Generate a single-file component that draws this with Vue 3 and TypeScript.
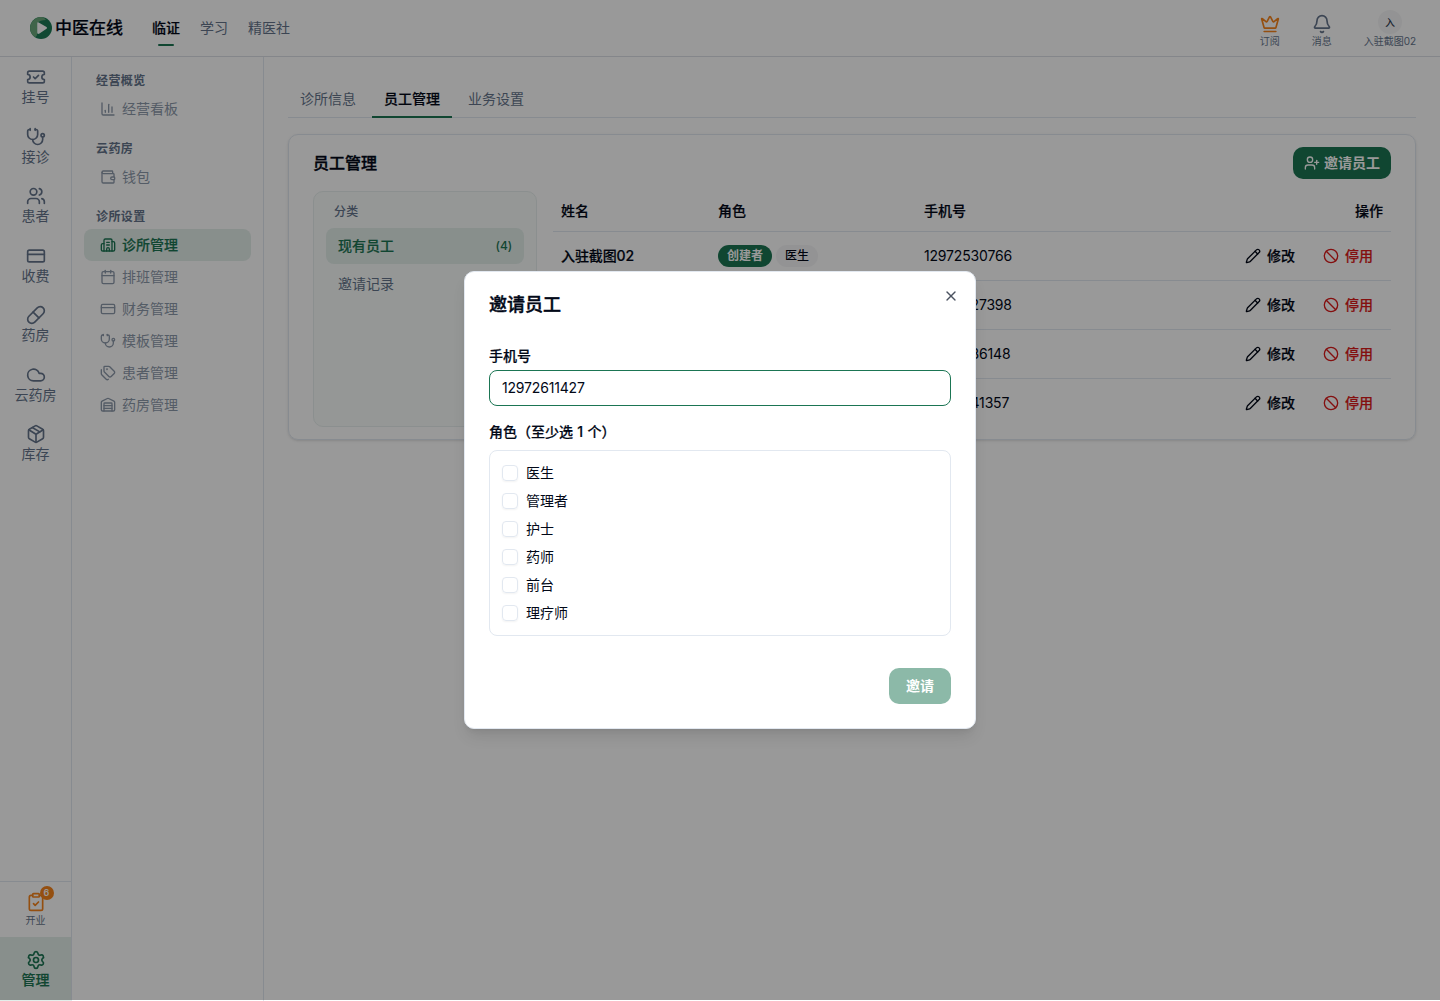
<script setup lang="ts">
import { h, ref, type FunctionalComponent } from 'vue'

const glyphs: Record<string, string[]> = {
  ticket: ['M2 9a3 3 0 0 1 0 6v2a2 2 0 0 0 2 2h16a2 2 0 0 0 2-2v-2a3 3 0 0 1 0-6V7a2 2 0 0 0-2-2H4a2 2 0 0 0-2 2Z', 'm9 12 2 2 4-4'],
  stethoscope: ['M11 2v2', 'M5 2v2', 'M5 3H4a2 2 0 0 0-2 2v4a6 6 0 0 0 12 0V5a2 2 0 0 0-2-2h-1', 'M8 15a6 6 0 0 0 12 0v-3', 'M22 10a2 2 0 1 1-4 0 2 2 0 0 1 4 0Z'],
  users: ['M16 21v-2a4 4 0 0 0-4-4H6a4 4 0 0 0-4 4v2', 'M16 3.128a4 4 0 0 1 0 7.744', 'M22 21v-2a4 4 0 0 0-3-3.87', 'M13 7a4 4 0 1 1-8 0 4 4 0 0 1 8 0Z'],
  card: ['M4 5h16a2 2 0 0 1 2 2v10a2 2 0 0 1-2 2H4a2 2 0 0 1-2-2V7a2 2 0 0 1 2-2Z', 'M2 10h20'],
  pill: ['m10.5 20.5 10-10a4.95 4.95 0 1 0-7-7l-10 10a4.95 4.95 0 1 0 7 7Z', 'm8.5 8.5 7 7'],
  cloud: ['M17.5 19H9a7 7 0 1 1 6.71-9h1.79a4.5 4.5 0 1 1 0 9Z'],
  box: ['M11 21.73a2 2 0 0 0 2 0l7-4A2 2 0 0 0 21 16V8a2 2 0 0 0-1-1.73l-7-4a2 2 0 0 0-2 0l-7 4A2 2 0 0 0 3 8v8a2 2 0 0 0 1 1.73z', 'M12 22V12', 'm3.3 7 7.703 4.734a2 2 0 0 0 1.994 0L20.7 7', 'm7.5 4.27 9 5.15'],
  clipboard: ['M9 2h6a1 1 0 0 1 1 1v2a1 1 0 0 1-1 1H9a1 1 0 0 1-1-1V3a1 1 0 0 1 1-1Z', 'M16 4h2a2 2 0 0 1 2 2v14a2 2 0 0 1-2 2H6a2 2 0 0 1-2-2V6a2 2 0 0 1 2-2h2', 'm9 14 2 2 4-4'],
  gear: ['M9.671 4.136a2.34 2.34 0 0 1 4.659 0 2.34 2.34 0 0 0 3.319 1.915 2.34 2.34 0 0 1 2.33 4.033 2.34 2.34 0 0 0 0 3.831 2.34 2.34 0 0 1-2.33 4.033 2.34 2.34 0 0 0-3.319 1.915 2.34 2.34 0 0 1-4.659 0 2.34 2.34 0 0 0-3.32-1.915 2.34 2.34 0 0 1-2.33-4.033 2.34 2.34 0 0 0 0-3.831A2.34 2.34 0 0 1 6.35 6.051a2.34 2.34 0 0 0 3.319-1.915', 'M15 12a3 3 0 1 1-6 0 3 3 0 0 1 6 0Z'],
  chart: ['M3 3v16a2 2 0 0 0 2 2h16', 'M18 17V9', 'M13 17V5', 'M8 17v-3'],
  wallet: ['M19 7V4a1 1 0 0 0-1-1H5a2 2 0 0 0 0 4h15a1 1 0 0 1 1 1v4h-3a2 2 0 0 0 0 4h3a1 1 0 0 0 1-1v-2a1 1 0 0 0-1-1', 'M3 5v14a2 2 0 0 0 2 2h15a1 1 0 0 0 1-1v-4'],
  building: ['M10 12h4', 'M10 8h4', 'M14 21v-3a2 2 0 0 0-4 0v3', 'M6 10H4a2 2 0 0 0-2 2v7a2 2 0 0 0 2 2h16a2 2 0 0 0 2-2V9a2 2 0 0 0-2-2h-2', 'M6 21V5a2 2 0 0 1 2-2h8a2 2 0 0 1 2 2v16'],
  calendar: ['M8 2v4', 'M16 2v4', 'M5 4h14a2 2 0 0 1 2 2v14a2 2 0 0 1-2 2H5a2 2 0 0 1-2-2V6a2 2 0 0 1 2-2Z', 'M3 10h18'],
  tags: ['M13.172 2a2 2 0 0 1 1.414.586l6.71 6.71a2.4 2.4 0 0 1 0 3.408l-4.592 4.592a2.4 2.4 0 0 1-3.408 0l-6.71-6.71A2 2 0 0 1 6 9.172V3a1 1 0 0 1 1-1z', 'M2 7v6.172a2 2 0 0 0 .586 1.414l6.71 6.71a2.4 2.4 0 0 0 3.191.193', 'M11 6.5a.5.5 0 1 1-1 0 .5.5 0 0 1 1 0Z'],
  warehouse: ['M18 21V10a1 1 0 0 0-1-1H7a1 1 0 0 0-1 1v11', 'M22 19a2 2 0 0 1-2 2H4a2 2 0 0 1-2-2V8a2 2 0 0 1 1.132-1.803l7.95-3.974a2 2 0 0 1 1.837 0l7.948 3.974A2 2 0 0 1 22 8z', 'M6 13h12', 'M6 17h12'],
  crown: ['M11.562 3.266a.5.5 0 0 1 .876 0L15.39 8.87a1 1 0 0 0 1.516.294L21.183 5.5a.5.5 0 0 1 .798.519l-2.834 10.246a1 1 0 0 1-.956.734H5.81a1 1 0 0 1-.957-.734L2.02 6.02a.5.5 0 0 1 .798-.519l4.276 3.664a1 1 0 0 0 1.516-.294z', 'M5 21h14'],
  bell: ['M10.268 21a2 2 0 0 0 3.464 0', 'M3.262 15.326A1 1 0 0 0 4 17h16a1 1 0 0 0 .74-1.673C19.41 13.956 18 12.499 18 8A6 6 0 0 0 6 8c0 4.499-1.411 5.956-2.738 7.326'],
  userPlus: ['M16 21v-2a4 4 0 0 0-4-4H6a4 4 0 0 0-4 4v2', 'M13 7a4 4 0 1 1-8 0 4 4 0 0 1 8 0Z', 'M19 8v6', 'M22 11h-6'],
  pencil: ['M21.174 6.812a1 1 0 0 0-3.986-3.987L3.842 16.174a2 2 0 0 0-.5.83l-1.321 4.352a.5.5 0 0 0 .623.622l4.353-1.32a2 2 0 0 0 .83-.497z', 'm15 5 4 4'],
  ban: ['M22 12a10 10 0 1 1-20 0 10 10 0 0 1 20 0Z', 'm4.93 4.93 14.14 14.14'],
  close: ['M18 6 6 18', 'm6 6 12 12'],
}

const Icon: FunctionalComponent<{ name: string; size?: number; weight?: number }> = (props) =>
  h(
    'svg',
    {
      width: props.size ?? 16,
      height: props.size ?? 16,
      viewBox: '0 0 24 24',
      fill: 'none',
      stroke: 'currentColor',
      'stroke-width': props.weight ?? 2,
      'stroke-linecap': 'round',
      'stroke-linejoin': 'round',
    },
    glyphs[props.name].map((d) => h('path', { d })),
  )
Icon.props = ['name', 'size', 'weight']

const rail = [
  { icon: 'ticket', label: '挂号' },
  { icon: 'stethoscope', label: '接诊' },
  { icon: 'users', label: '患者' },
  { icon: 'card', label: '收费' },
  { icon: 'pill', label: '药房' },
  { icon: 'cloud', label: '云药房' },
  { icon: 'box', label: '库存' },
]

const groups = [
  { title: '经营概览', items: [{ icon: 'chart', label: '经营看板' }] },
  { title: '云药房', items: [{ icon: 'wallet', label: '钱包' }] },
  {
    title: '诊所设置',
    items: [
      { icon: 'building', label: '诊所管理', active: true },
      { icon: 'calendar', label: '排班管理' },
      { icon: 'card', label: '财务管理' },
      { icon: 'stethoscope', label: '模板管理' },
      { icon: 'tags', label: '患者管理' },
      { icon: 'warehouse', label: '药房管理' },
    ],
  },
] as { title: string; items: { icon: string; label: string; active?: boolean }[] }[]

const staff = [
  { name: '入驻截图02', roles: ['创建者', '医生'], phone: '12972530766' },
  { name: '员工一', roles: ['医生'], phone: '12972527398' },
  { name: '员工二', roles: ['护士'], phone: '12972536148' },
  { name: '员工三', roles: ['药师'], phone: '12972541357' },
]

const roles = ['医生', '管理者', '护士', '药师', '前台', '理疗师']
const phone = ref('12972611427')
const picked = ref<string[]>([])
</script>

<template>
  <div class="app">
    <header class="topbar">
      <div class="brand">
        <svg class="logo" viewBox="0 0 22 22">
          <circle cx="11" cy="11" r="11" fill="#1b7a55" />
          <path d="M13 0.200A11 11 0 0 0 5 20.200Q7.500 19 7.200 16V6Q10 3 16 3Q15 1.200 13 0.200Z" fill="#6aa77a" />
          <path d="M7.200 6.300Q7.200 4.600 8.700 5.500L16.500 10Q17.800 10.900 16.500 11.800L9.500 16.500Q7.200 17.800 7.200 15.500Z" fill="#fff" />
        </svg>
        <span>中医在线</span>
      </div>
      <nav class="mainnav">
        <a class="current">临证</a>
        <a>学习</a>
        <a>精医社</a>
      </nav>
      <div class="tools">
        <div class="tool"><Icon class="orange" name="crown" :size="20" /><span>订阅</span></div>
        <div class="tool"><Icon name="bell" :size="20" /><span>消息</span></div>
        <div class="tool account"><i class="avatar">入</i><span>入驻截图02</span></div>
      </div>
    </header>

    <div class="body">
      <aside class="rail">
        <a v-for="r in rail" :key="r.label" class="rail-item">
          <Icon :name="r.icon" :size="20" />
          <span>{{ r.label }}</span>
        </a>
        <div class="rail-foot">
          <a class="opening">
            <span class="clip"><Icon name="clipboard" :size="20" /><b class="count">6</b></span>
            <span>开业</span>
          </a>
          <a class="manage">
            <Icon name="gear" :size="20" />
            <span>管理</span>
          </a>
        </div>
      </aside>

      <aside class="side">
        <section v-for="g in groups" :key="g.title" class="group">
          <h4>{{ g.title }}</h4>
          <a v-for="i in g.items" :key="i.label" class="side-item" :class="{ active: i.active }">
            <Icon :name="i.icon" :size="16" />
            <span>{{ i.label }}</span>
          </a>
        </section>
      </aside>

      <main class="main">
        <div class="tabs">
          <a>诊所信息</a>
          <a class="on">员工管理</a>
          <a>业务设置</a>
        </div>

        <section class="card">
          <div class="card-head">
            <h2>员工管理</h2>
            <button class="primary"><Icon name="userPlus" :size="16" /><span>邀请员工</span></button>
          </div>
          <div class="card-body">
            <div class="cats">
              <h5>分类</h5>
              <a class="cat on"><span>现有员工</span><small>(4)</small></a>
              <a class="cat"><span>邀请记录</span></a>
            </div>
            <div class="table">
              <div class="tr th">
                <span class="c1">姓名</span><span class="c2">角色</span><span class="c3">手机号</span><span class="c4">操作</span>
              </div>
              <div v-for="s in staff" :key="s.phone" class="tr">
                <span class="c1 name">{{ s.name }}</span>
                <span class="c2 badges">
                  <i v-for="r in s.roles" :key="r" class="badge" :class="{ owner: r === '创建者' }">{{ r }}</i>
                </span>
                <span class="c3 num">{{ s.phone }}</span>
                <span class="c4 actions">
                  <a><Icon name="pencil" :size="16" />修改</a>
                  <a class="danger"><Icon name="ban" :size="16" />停用</a>
                </span>
              </div>
            </div>
          </div>
        </section>
      </main>
    </div>

    <div class="overlay">
      <div class="dialog">
        <a class="close"><Icon name="close" :size="16" /></a>
        <h3>邀请员工</h3>
        <label class="field">手机号</label>
        <input v-model="phone" type="text" />
        <label class="field second">角色（至少选 <span class="one">1</span> 个）</label>
        <div class="options">
          <label v-for="r in roles" :key="r" class="option">
            <input v-model="picked" type="checkbox" :value="r" />
            <span>{{ r }}</span>
          </label>
        </div>
        <div class="foot"><button class="submit">邀请</button></div>
      </div>
    </div>
  </div>
</template>

<style>
html, body { overflow: hidden; background: #fff; }
</style>

<style scoped>
* { box-sizing: border-box; margin: 0; }
.app {
  --green: #1b7553;
  --line: #e2e8f0;
  --ink: #020817;
  --muted: #64748b;
  height: 1001px;
  display: flex;
  flex-direction: column;
  font: 400 14px/20px Inter, "Noto Sans CJK SC", sans-serif;
  color: var(--ink);
}
svg { flex: none; display: block; }
i { font-style: normal; }
button { font: inherit; border: 0; color: #fff; }

/* Medium-weight labels get a hairline stroke so they sit between 500 and 700. */
.brand span, .current, .on, .manage span, .side-item.active span, h2, h3, .th, .name, .actions a, .field {
  -webkit-text-stroke: 0.2px currentColor;
}

.topbar { height: 57px; flex: none; border-bottom: 1px solid #dcdfe6; display: flex; padding: 0 24px 0 30px; }
.brand { display: flex; align-items: center; gap: 3px; height: 56px; font-size: 17px; font-weight: 500; width: 122px; white-space: nowrap; }
.logo { width: 22px; height: 22px; }
.mainnav { display: flex; gap: 20px; height: 56px; }
.mainnav a { line-height: 56px; color: var(--muted); position: relative; }
.mainnav a.current { color: var(--ink); font-weight: 500; }
.mainnav a.current::after { content: ""; position: absolute; left: 6px; top: 44px; width: 16px; height: 2px; border-radius: 1px; background: var(--green); }
.tools { margin-left: auto; display: flex; gap: 32px; color: var(--muted); font-size: 10px; line-height: 14px; }
.tool { display: flex; flex-direction: column; align-items: center; padding-top: 14px; }
.account { padding-top: 10px; letter-spacing: -0.04px; }
.avatar { width: 24px; height: 24px; border-radius: 50%; background: #f6f6f7; text-align: center; line-height: 24px; color: #334155; font-weight: 500; }
.orange { color: #f7841c; }

.body { flex: 1; display: flex; min-height: 0; }
.rail { width: 72px; border-right: 1px solid var(--line); display: flex; flex-direction: column; color: var(--muted); }
.rail-item { height: 59.500px; padding-top: 10px; display: flex; flex-direction: column; align-items: center; }
.rail-foot { margin-top: auto; border-top: 1px solid var(--line); }
.opening { display: flex; flex-direction: column; align-items: center; height: 55px; padding-top: 10px; font-size: 10px; line-height: 17px; }
.clip { position: relative; color: #f7841c; }
.count { position: absolute; left: 14px; top: -6px; width: 14px; height: 14px; border-radius: 50%; background: #f7841c; color: #fff; font-size: 9px; line-height: 14px; text-align: center; font-weight: 600; }
.manage { height: 64px; background: #e3eeea; color: var(--green); font-weight: 500; display: flex; flex-direction: column; align-items: center; padding-top: 13px; }

.side { width: 192px; border-right: 1px solid var(--line); padding: 12px; display: flex; flex-direction: column; gap: 12px; }
.group h4 { font-size: 12px; line-height: 24px; height: 24px; padding-left: 12px; font-weight: 600; color: var(--muted); letter-spacing: 0.4px; }
.side-item { display: flex; align-items: center; gap: 6px; height: 32px; padding-left: 16px; border-radius: 8px; color: #8d99aa; }
.side-item.active { background: #e3eeea; color: var(--green); font-weight: 500; }

.main { flex: 1; padding: 24px 24px 0; }
.tabs { display: flex; gap: 4px; height: 37px; border-bottom: 1px solid var(--line); }
.tabs a { height: 37px; line-height: 36px; padding: 0 12px; color: var(--muted); }
.tabs a.on { color: var(--ink); font-weight: 500; border-bottom: 2px solid var(--green); }

.card { margin-top: 16px; height: 306px; border: 1px solid var(--line); border-radius: 10px; padding: 12px 24px; box-shadow: 0 1px 3px rgba(0, 0, 0, 0.1), 0 1px 2px -1px rgba(0, 0, 0, 0.1); }
.card-head { display: flex; justify-content: space-between; height: 44px; }
.card-head h2 { font-size: 16px; line-height: 32px; font-weight: 500; -webkit-text-stroke-width: 0.35px; }
.primary { width: 98px; height: 32px; border-radius: 10px; background: var(--green); display: flex; align-items: center; justify-content: center; gap: 4px; font-weight: 600; padding: 0; }
.card-body { display: flex; gap: 16px; height: 236px; }
.cats { width: 224px; border: 1px solid #e8efee; border-radius: 10px; background: #f9fcfb; padding: 8px 12px; }
.cats h5 { font-size: 12px; font-weight: 500; color: var(--muted); line-height: 24px; height: 28px; padding-left: 8px; letter-spacing: 0.3px; }
.cat { display: flex; justify-content: space-between; align-items: center; height: 36px; padding: 0 12px; border-radius: 8px; margin-bottom: 2px; color: var(--muted); }
.cat.on { background: #e3eeea; color: var(--green); font-weight: 500; }
.cat small { font-size: 12px; font-weight: 500; letter-spacing: -0.1px; -webkit-text-stroke: 0; }
.table { flex: 1; }
.tr { display: flex; align-items: center; height: 49px; border-bottom: 1px solid var(--line); padding: 0 8px; }
.tr:last-child { border-bottom: 0; height: 48px; }
.th { height: 41px; font-weight: 500; }
.c1 { width: 157px; }
.c2 { width: 206px; }
.c3 { flex: 1; }
.num { letter-spacing: -0.18px; }
.c4 { text-align: right; }
.name { font-weight: 500; letter-spacing: -0.1px; }
.badges { display: flex; gap: 4px; }
.badge { height: 22px; line-height: 22px; border-radius: 11px; padding: 0 9px; font-size: 12px; font-weight: 500; background: #f6f6f7; }
.badge.owner { background: var(--green); color: #fff; font-weight: 600; }
.actions { display: flex; gap: 28px; padding-right: 10px; }
.actions a { display: flex; align-items: center; gap: 6px; font-weight: 500; }
.danger { color: #dc1a1a; }

.overlay { position: absolute; inset: 0 0 auto 0; height: 1000px; background: rgba(0, 0, 0, 0.4); display: flex; align-items: center; justify-content: center; }
.dialog { position: relative; width: 512px; height: 458px; background: #fff; border: 1px solid var(--line); border-radius: 10px; padding: 24px; display: flex; flex-direction: column; box-shadow: 0 10px 15px -3px rgba(0, 0, 0, 0.1), 0 4px 6px -4px rgba(0, 0, 0, 0.1); }
.close { position: absolute; right: 16px; top: 16px; color: #4b5260; }
h3 { font-size: 18px; line-height: 18px; font-weight: 500; -webkit-text-stroke-width: 0.4px; }
.field { font-weight: 500; line-height: 20px; margin-top: 32px; height: 20px; }
.field.second { margin-top: 16px; }
.one { padding: 0 0.6px; }
input[type="text"] { margin-top: 4px; height: 36px; border: 1px solid var(--green); border-radius: 8px; padding: 0 12px 1px; font: inherit; letter-spacing: -0.18px; color: inherit; outline: 0; flex: none; }
.options { margin-top: 8px; border: 1px solid var(--line); border-radius: 8px; padding: 12px; height: 186px; display: flex; flex-direction: column; gap: 8px; }
.option { display: flex; align-items: center; gap: 8px; height: 20px; }
.option input { appearance: none; width: 16px; height: 16px; border: 1px solid var(--line); border-radius: 4px; box-shadow: 0 1px 2px rgba(0, 0, 0, 0.05); }
.foot { margin-top: 32px; display: flex; justify-content: flex-end; }
.submit { width: 62px; height: 36px; border-radius: 10px; background: var(--green); opacity: 0.5; font-weight: 600; padding: 0; }
</style>
